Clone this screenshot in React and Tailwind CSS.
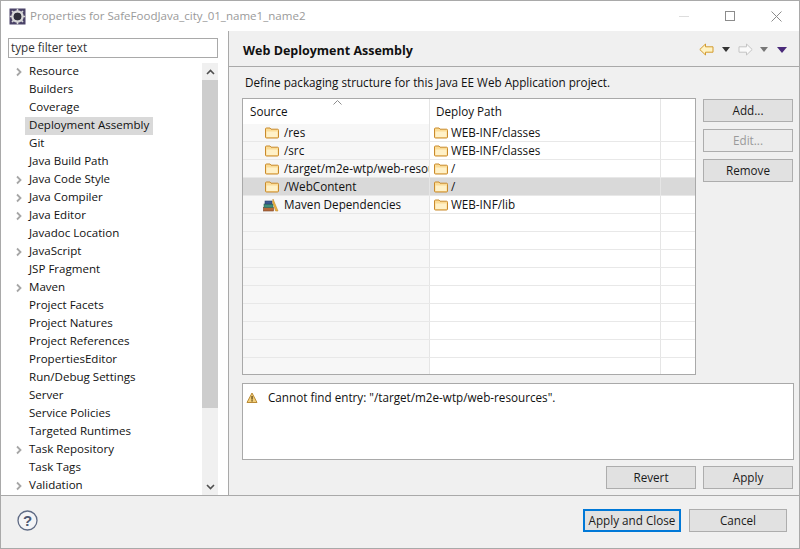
import React from 'react';

const treeItems = [
  ['Resource', true], ['Builders', false], ['Coverage', false], ['Deployment Assembly', false, true],
  ['Git', false], ['Java Build Path', false], ['Java Code Style', true], ['Java Compiler', true],
  ['Java Editor', true], ['Javadoc Location', false], ['JavaScript', true], ['JSP Fragment', false],
  ['Maven', true], ['Project Facets', false], ['Project Natures', false], ['Project References', false],
  ['PropertiesEditor', false], ['Run/Debug Settings', false], ['Server', false], ['Service Policies', false],
  ['Targeted Runtimes', false], ['Task Repository', true], ['Task Tags', false], ['Validation', true],
];

const rows = [
  ['/res', 'WEB-INF/classes'],
  ['/src', 'WEB-INF/classes'],
  ['/target/m2e-wtp/web-resources', '/'],
  ['/WebContent', '/', true],
  ['Maven Dependencies', 'WEB-INF/lib', false, true],
  ...Array.from({ length: 9 }, () => ['', '']),
];

const Folder = () => (
  <svg width="14" height="12" viewBox="0 0 14 12" className="shrink-0">
    <path d="M0.5 2 a1 1 0 0 1 1-1 h3.5 l1 1.2 h6.5 a1 1 0 0 1 1 1 v6.8 a1 1 0 0 1-1 1 h-11 a1 1 0 0 1-1-1z" fill="#fbdc96" stroke="#c98a2b" />
    <path d="M1.5 4.5 h11 v5.5 h-11z" fill="#fff1c8" />
  </svg>
);

const MavenIcon = () => (
  <svg width="16" height="14" viewBox="0 0 16 14" className="shrink-0">
    <rect x="0.5" y="9.5" width="10" height="3.5" fill="#b5693a" stroke="#7b4526" strokeWidth="0.6" />
    <rect x="1" y="6" width="9" height="3.5" fill="#3f8f7a" stroke="#2c6355" strokeWidth="0.6" />
    <rect x="2" y="3" width="7" height="3" fill="#3c5a92" stroke="#2a3f68" strokeWidth="0.6" />
    <path d="M10 1 L15 13 L12.6 13 L9.6 4z" fill="#eeb53f" stroke="#b97f1e" strokeWidth="0.5" />
  </svg>
);

const Chevron = () => (
  <svg width="8" height="10" viewBox="0 0 8 10" className="shrink-0">
    <path d="M2 1.5 L5.5 5 L2 8.5" fill="none" stroke="#a6a6a6" strokeWidth="1.8" />
  </svg>
);

const NavArrow = ({ left, active }) => (
  <svg width="15" height="13" viewBox="0 0 15 13">
    <path
      d={left ? 'M0.8 6.5 L6.5 1 V3.8 H14 V9.2 H6.5 V12z' : 'M14.2 6.5 L8.5 1 V3.8 H1 V9.2 H8.5 V12z'}
      fill={active ? '#fff3c4' : '#fafafa'}
      stroke={active ? '#d29a2e' : '#c4c4c4'}
      strokeLinejoin="round"
    />
  </svg>
);

const Caret = ({ color, wide }) => (
  <div className={`w-0 h-0 border-x-transparent ${wide ? 'border-x-[5px] border-t-[6px]' : 'border-x-[4px] border-t-[5px]'}`} style={{ borderTopColor: color }} />
);

const Btn = ({ children, disabled, className = '' }) => (
  <div className={`h-[23px] w-[90px] flex items-center justify-center border border-[#adadad] bg-[#e1e1e1] ${disabled ? 'text-[#9a9a9a] bg-[#ececec]' : 'text-[#1a1a1a]'} ${className}`}>
    {children}
  </div>
);

export default function App() {
  return (
    <div className="w-[800px] h-[549px] flex flex-col bg-[#f0f0f0] border border-[#a9a9a9] overflow-hidden text-[11.7px] text-[#111] font-['Open_Sans','Noto_Sans',sans-serif]">
      {/* title bar */}
      <div className="h-[30px] shrink-0 bg-white flex items-center pl-[8px]">
        <svg width="17" height="17" viewBox="0 0 17 17" className="shrink-0">
          <rect x="0.5" y="0.5" width="16" height="16" fill="#4b4368" />
          <circle cx="8.5" cy="8.5" r="5" fill="none" stroke="#d8d8d8" strokeWidth="2.4" />
          <path d="M8.5 0.8 V3 M8.5 14 V16.2 M0.8 8.5 H3 M14 8.5 H16.2 M3 3 L4.6 4.6 M12.4 12.4 L14 14 M14 3 L12.4 4.6 M4.6 12.4 L3 14" stroke="#d8d8d8" strokeWidth="1.6" />
          <circle cx="8.5" cy="8.5" r="3.8" fill="#2f2f3a" />
        </svg>
        <span className="ml-[4px] text-[11.55px] text-[#9a9a9a]">Properties for SafeFoodJava_city_01_name1_name2</span>
        <div className="ml-auto flex items-center">
          <div className="w-[46px] flex justify-center"><div className="w-[10px] h-px bg-[#dddddd]" /></div>
          <div className="w-[46px] flex justify-center"><div className="w-[10px] h-[10px] border border-[#8c8c8c]" /></div>
          <div className="w-[46px] flex justify-center">
            <svg width="11" height="11" viewBox="0 0 11 11"><path d="M0.5 0.5 L10.5 10.5 M10.5 0.5 L0.5 10.5" stroke="#8c8c8c" fill="none" /></svg>
          </div>
        </div>
      </div>

      <div className="flex flex-1 min-h-0">
        {/* left tree */}
        <div className="w-[228px] shrink-0 bg-white border-r border-[#a9a9a9] flex flex-col pl-[7px] pr-[10px]">
          <div className="h-[20px] mt-[7px] border border-[#a9a9a9] px-[2px] flex items-center text-[#333]">type filter text</div>
          <div className="flex-1 min-h-0 flex mt-[5px]">
            <div className="flex-1 min-w-0 overflow-hidden text-[11.55px]">
              {treeItems.map(([name, arrow, selected]) => (
                <div key={name} className="h-[18px] flex items-center pl-[7px]">
                  <div className="w-[10px] flex items-center">{arrow && <Chevron />}</div>
                  <span className={`pl-[4px] pr-[4px] h-[18px] leading-[16px] whitespace-nowrap ${selected ? 'bg-[#d9d9d9]' : ''}`}>{name}</span>
                </div>
              ))}
            </div>
            <div className="w-[16px] shrink-0 bg-[#f0f0f0] flex flex-col">
              <div className="h-[17px] flex items-center justify-center">
                <svg width="9" height="6" viewBox="0 0 9 6"><path d="M1 5 L4.5 1.5 L8 5" fill="none" stroke="#505050" strokeWidth="1.6" /></svg>
              </div>
              <div className="h-[328px] bg-[#cdcdcd]" />
              <div className="mt-auto h-[17px] flex items-center justify-center">
                <svg width="9" height="6" viewBox="0 0 9 6"><path d="M1 1 L4.5 4.5 L8 1" fill="none" stroke="#505050" strokeWidth="1.6" /></svg>
              </div>
            </div>
          </div>
        </div>

        {/* right side */}
        <div className="flex-1 min-w-0 flex flex-col">
          <div className="h-[36px] shrink-0 border-b border-[#a9a9a9] flex items-center pl-[14px] pr-[12px] pt-[2px]">
            <span className="font-bold text-[12.5px] pt-[3px]">Web Deployment Assembly</span>
            <div className="ml-auto flex items-center">
              <NavArrow left active />
              <div className="ml-[8px]"><Caret color="#333" /></div>
              <div className="ml-[8px]"><NavArrow /></div>
              <div className="ml-[7px]"><Caret color="#777" /></div>
              <div className="ml-[9px]"><Caret color="#4a2a7a" wide /></div>
            </div>
          </div>

          <div className="flex-1 min-h-0 pl-[13px] pr-[5px] flex flex-col">
            <div className="h-[31px] shrink-0 pl-[3px] flex items-center">Define packaging structure for this Java EE Web Application project.</div>

            <div className="flex gap-[7px]">
              {/* table */}
              <div className="w-[454px] h-[277px] bg-white border border-[#a9a9a9] overflow-hidden flex flex-col">
                <div className="h-[25px] shrink-0 flex relative">
                  <svg width="9" height="5" viewBox="0 0 9 5" className="absolute left-[90px] top-[1px]"><path d="M0.5 4.5 L4.5 0.5 L8.5 4.5" fill="none" stroke="#8c8c8c" /></svg>
                  <div className="w-[187px] border-r border-[#e5e5e5] pl-[7px] flex items-center">Source</div>
                  <div className="w-[231px] border-r border-[#e5e5e5] pl-[6px] flex items-center">Deploy Path</div>
                </div>
                {rows.map(([src, path, selected, maven], i) => (
                  <div key={i} className={`h-[18px] shrink-0 flex border-b border-[#e8e8e8] ${selected ? 'bg-[#d9d9d9]' : ''}`}>
                    <div className={`w-[187px] shrink-0 flex items-center overflow-hidden whitespace-nowrap border-r border-[#e5e5e5] ${maven ? 'pl-[20px]' : 'pl-[22px]'} ${selected ? '' : 'bg-[#f7f7f7]'}`}>
                      {src && (maven ? <MavenIcon /> : <Folder />)}
                      {src && <span className="ml-[5px]">{src}</span>}
                    </div>
                    <div className="w-[231px] shrink-0 flex items-center pl-[4px] border-r border-[#e5e5e5]">
                      {path && <Folder />}
                      {path && <span className="ml-[3px]">{path}</span>}
                    </div>
                  </div>
                ))}
              </div>

              {/* side buttons */}
              <div className="flex flex-col gap-[7px] pt-px">
                <Btn>Add...</Btn>
                <Btn disabled>Edit...</Btn>
                <Btn>Remove</Btn>
              </div>
            </div>

            {/* message */}
            <div className="mt-[8px] h-[77px] w-[552px] shrink-0 bg-white border border-[#a9a9a9] pl-[3px] pt-[5px] flex items-start">
              <div className="h-[18px] flex items-center">
                <svg width="12" height="12" viewBox="0 0 12 12">
                  <path d="M6 1 L11 10.5 H1z" fill="#f3cf7a" stroke="#b98a35" strokeLinejoin="round" />
                  <rect x="5.4" y="4" width="1.3" height="3.6" fill="#5c4313" />
                  <rect x="5.4" y="8.2" width="1.3" height="1.3" fill="#5c4313" />
                </svg>
              </div>
              <span className="ml-[10px] leading-[17px]">Cannot find entry: "/target/m2e-wtp/web-resources".</span>
            </div>

            <div className="mt-[6px] flex justify-end gap-[7px] pr-px">
              <Btn>Revert</Btn>
              <Btn>Apply</Btn>
            </div>
          </div>
        </div>
      </div>

      {/* footer */}
      <div className="h-[53px] shrink-0 border-t border-[#a9a9a9] flex items-center pl-[16px] pr-[12px] pb-[3px]">
        <svg width="21" height="21" viewBox="0 0 21 21">
          <circle cx="10.5" cy="10.5" r="9.5" fill="#f4f4f6" stroke="#5f6b85" strokeWidth="1.3" />
          <text x="10.5" y="16" textAnchor="middle" fontSize="15" fontWeight="700" fill="#4d5872" fontFamily="Liberation Sans, sans-serif">?</text>
        </svg>
        <div className="ml-auto flex gap-[8px]">
          <Btn className="!w-[98px] !border-2 !border-[#0078d7]">Apply and Close</Btn>
          <Btn className="!w-[98px]">Cancel</Btn>
        </div>
      </div>
    </div>
  );
}
